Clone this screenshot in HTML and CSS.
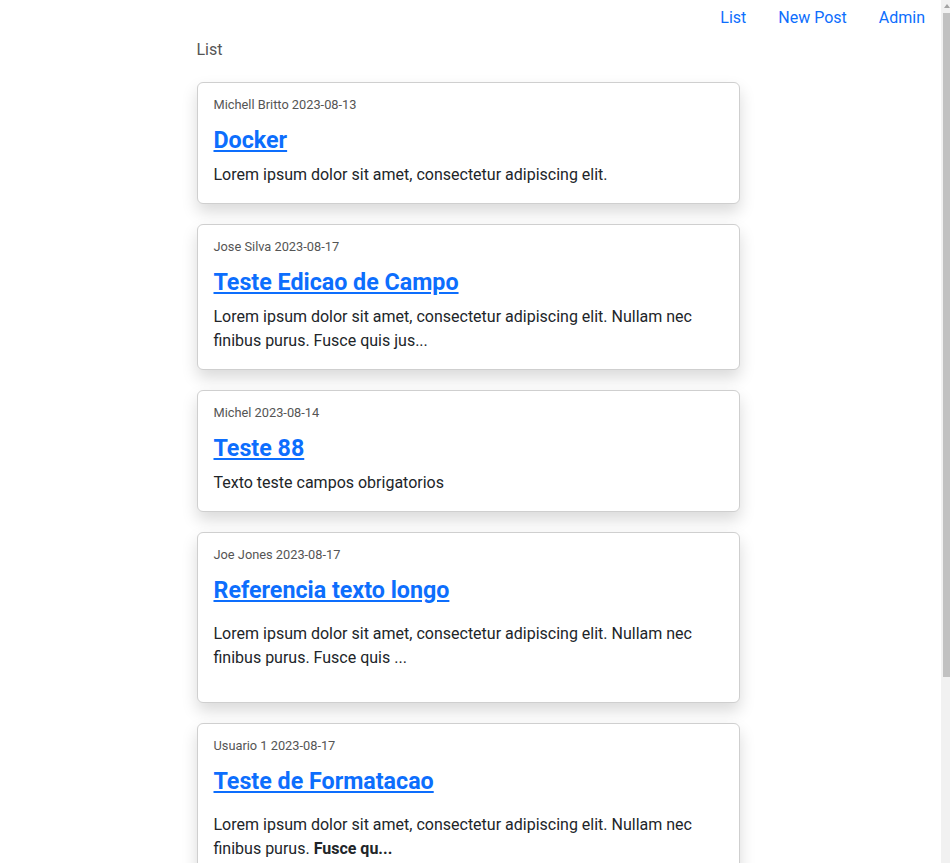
FILE: index.html
```html
<!DOCTYPE html>
<html lang="pt">
<head>
<meta charset="utf-8">
<title>List</title>
<link rel="stylesheet" href="styles.css">
</head>
<body>
<nav class="topnav">
  <a class="nav-link" href="#">List</a>
  <a class="nav-link" href="#">New Post</a>
  <a class="nav-link" href="#">Admin</a>
</nav>
<main class="container">
  <div class="page-title">List</div>
  <div class="post-list">
    <article class="card">
      <div class="meta">Michell Britto 2023-08-13</div>
      <h3 class="title"><a href="#">Docker</a></h3>
      <div class="excerpt">Lorem ipsum dolor sit amet, consectetur adipiscing elit.</div>
    </article>
    <article class="card">
      <div class="meta">Jose Silva 2023-08-17</div>
      <h3 class="title"><a href="#">Teste Edicao de Campo</a></h3>
      <div class="excerpt">Lorem ipsum dolor sit amet, consectetur adipiscing elit. Nullam nec finibus purus. Fusce quis jus...</div>
    </article>
    <article class="card">
      <div class="meta">Michel 2023-08-14</div>
      <h3 class="title"><a href="#">Teste 88</a></h3>
      <div class="excerpt">Texto teste campos obrigatorios</div>
    </article>
    <article class="card">
      <div class="meta">Joe Jones 2023-08-17</div>
      <h3 class="title"><a href="#">Referencia texto longo</a></h3>
      <div class="excerpt rich"><p>Lorem ipsum dolor sit amet, consectetur adipiscing elit. Nullam nec finibus purus. Fusce quis ...</p></div>
    </article>
    <article class="card">
      <div class="meta">Usuario 1 2023-08-17</div>
      <h3 class="title"><a href="#">Teste de Formatacao</a></h3>
      <div class="excerpt rich"><p>Lorem ipsum dolor sit amet, consectetur adipiscing elit. Nullam nec finibus purus. <strong>Fusce qu...</strong></p></div>
    </article>
  </div>
</main>
<div class="scrollbar" aria-hidden="true">
  <span class="scroll-arrow"></span>
  <span class="scroll-thumb"></span>
</div>
</body>
</html>
```
FILE: styles.css
```css
html, body {
  margin: 0;
  padding: 0;
}
body {
  font-family: Roboto, "Liberation Sans", sans-serif;
  font-size: 16px;
  line-height: 24px;
  color: #212529;
  background: #fff;
  padding-right: 9px;
}
a {
  color: #0d6efd;
}
.topnav {
  display: flex;
  justify-content: flex-end;
  padding: 6px 0 0;
}
.nav-link {
  padding: 0 16px;
  text-decoration: none;
  line-height: 24px;
}
.container {
  width: 543px;
  margin-left: calc(50% - 274px);
  padding-bottom: 210px;
}
.page-title {
  color: #555;
  margin-top: 8px;
  line-height: 24px;
}
.post-list {
  display: flex;
  flex-direction: column;
  gap: 20px;
  margin-top: 20px;
}
.card {
  border: 1px solid #cfcfcf;
  border-radius: 6px;
  background: #fff;
  box-shadow: 0 8px 16px rgba(0, 0, 0, 0.15);
  padding: 12px 16px 16px;
}
.meta {
  font-size: 12.8px;
  line-height: 20px;
  color: #555;
}
.title {
  margin: 10px 0 8px;
  font-size: 23.25px;
  line-height: 30px;
  font-weight: 700;
}
.title a {
  text-decoration: underline;
  text-underline-offset: 2px;
}
.excerpt {
  line-height: 24px;
}
.excerpt.rich {
  padding-top: 9px;
}
.excerpt p {
  margin: 0 0 16px;
}
.scrollbar {
  position: fixed;
  top: 0;
  right: 0;
  bottom: 0;
  width: 9px;
  background: #f1f1f1;
}
.scroll-arrow {
  position: absolute;
  top: 4px;
  left: 3px;
  width: 0;
  height: 0;
  border-left: 3px solid transparent;
  border-right: 3px solid transparent;
  border-bottom: 4px solid #a3a3a3;
}
.scroll-thumb {
  position: absolute;
  top: 13px;
  left: 2px;
  right: 0;
  height: 664px;
  background: #c1c1c1;
}
```
